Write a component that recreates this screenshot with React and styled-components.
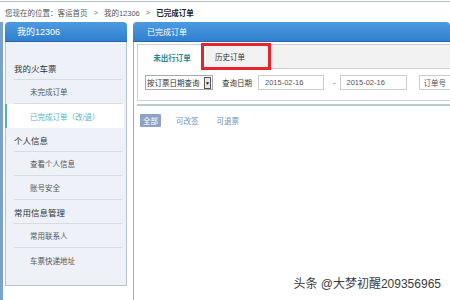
import React from "react";
import styled, { createGlobalStyle } from "styled-components";

const GlobalStyle = createGlobalStyle`
  body {
    margin: 0;
    background: #fff;
    font-family: "Liberation Sans", "Noto Sans CJK SC", sans-serif;
  }
`;

const Page = styled.div`
  position: relative;
  width: 450px;
  height: 300px;
  overflow: hidden;
  display: flex;
  flex-direction: column;
  background: #fff;
`;

const Breadcrumb = styled.div`
  height: 21px;
  box-sizing: border-box;
  border-top: 1px solid #b4c2cf;
  margin-top: 1px;
  padding-left: 5px;
  display: flex;
  align-items: center;
  font-size: 7.5px;
  color: #333;
`;

const Crumb = styled.span`
  color: ${(p) => (p.$current ? "#222" : "#555")};
  font-weight: ${(p) => (p.$current ? "bold" : "normal")};
`;

const Arrow = styled.span`
  margin: 0 6px;
  color: #666;
`;

const Body = styled.div`
  flex: 1;
  display: flex;
  min-height: 0;
`;

const EdgeStrip = styled.div`
  width: 3px;
  background: #7aa3c9;
  flex-shrink: 0;
`;

const Sidebar = styled.div`
  width: 122px;
  margin-left: 2px;
  flex-shrink: 0;
  display: flex;
  flex-direction: column;
  align-self: flex-start;
`;

const PanelHeader = styled.div`
  height: 20px;
  box-sizing: border-box;
  border-radius: 4px 4px 0 0;
  background: linear-gradient(#4c9be0, #2f80cf);
  border-bottom: 1px solid #2469b0;
  color: #fff;
  display: flex;
  align-items: center;
  padding-left: ${(p) => p.$indent}px;
  font-size: ${(p) => p.$size}px;
`;

const SideBody = styled.div`
  height: 244px;
  box-sizing: border-box;
  background: #eef2f8;
  border: 1px solid #b9c3cd;
  border-top: none;
  padding-top: 14px;
  display: flex;
  flex-direction: column;
`;

const SideHeading = styled.div`
  height: 24px;
  box-sizing: border-box;
  margin: 0 4px 0 8px;
  border-bottom: 1px solid #d6dce4;
  display: flex;
  align-items: center;
  font-size: 8.5px;
  color: #333;
`;

const SideItem = styled.div`
  height: 24px;
  box-sizing: border-box;
  display: flex;
  align-items: center;
  font-size: 7.5px;
  margin: ${(p) => (p.$active ? "0 2px 0 -1px" : "0 4px 0 8px")};
  padding-left: ${(p) => (p.$active ? "23px" : "16px")};
  background: ${(p) => (p.$active ? "#fff" : "transparent")};
  border-left: ${(p) => (p.$active ? "2px solid #5aaebb" : "none")};
  border-bottom: ${(p) => (p.$last || p.$active ? "none" : "1px solid #d6dce4")};
  color: ${(p) => (p.$active ? "#5fb0bc" : "#555")};
`;

const Main = styled.div`
  flex: 1;
  margin-left: 6px;
  min-width: 0;
  display: flex;
  flex-direction: column;
`;

const MainBody = styled.div`
  flex: 1;
  border-left: 1px solid #a9a9a9;
  padding: 2px 0 0 3px;
  overflow: hidden;
`;

const TabBox = styled.div`
  position: relative;
  width: 340px;
  border: 1px solid #cfcfcf;
  box-sizing: border-box;
`;

const TabStrip = styled.div`
  height: 24px;
  box-sizing: border-box;
  background: #f2f2f2;
  border-bottom: 1px solid #cfcfcf;
  display: flex;
`;

const Tab = styled.div`
  height: ${(p) => (p.$active ? "24px" : "23px")};
  box-sizing: border-box;
  display: flex;
  align-items: center;
  justify-content: ${(p) => (p.$active ? "center" : "flex-start")};
  width: ${(p) => (p.$active ? "68px" : "auto")};
  padding: ${(p) => (p.$active ? "0" : "0 20px 0 9px")};
  background: ${(p) => (p.$active ? "#fff" : "transparent")};
  font-size: 7.5px;
  font-weight: ${(p) => (p.$active ? "bold" : "normal")};
  color: ${(p) => (p.$active ? "#2b8797" : "#333")};
`;

const RedMark = styled.div`
  position: absolute;
  left: 63px;
  top: -2px;
  width: 70px;
  height: 27px;
  box-sizing: border-box;
  border: 3px solid #e2262c;
`;

const SearchRow = styled.div`
  display: flex;
  align-items: center;
  padding: 6px 0 10px 7px;
  font-size: 7.5px;
  color: #333;
  white-space: nowrap;
`;

const Select = styled.div`
  height: 15px;
  width: 68px;
  flex-shrink: 0;
  box-sizing: border-box;
  border: 1px solid #a8a8a8;
  display: flex;
  align-items: center;
  justify-content: space-between;
  padding-left: 1px;
  background: #fff;
`;

const SelectArrow = styled.span`
  width: 7px;
  height: 12px;
  margin-right: 1px;
  box-sizing: border-box;
  border: 1px solid #555;
  background: #e8e8e8;
  display: flex;
  align-items: center;
  justify-content: center;
  font-size: 5px;
  color: #111;
`;

const Label = styled.span`
  margin: 0 6px 0 9px;
  flex-shrink: 0;
`;

const Field = styled.div`
  height: 15px;
  width: ${(p) => p.$w}px;
  box-sizing: border-box;
  border: 1px solid #cdcdcd;
  background: #fff;
  display: flex;
  align-items: center;
  padding-left: ${(p) => (p.$tight ? 4 : 6)}px;
  color: #555;
  flex-shrink: 0;
  margin-left: ${(p) => p.$gap || 0}px;
`;

const Dash = styled.span`
  margin: 0 4px 0 9px;
  color: #555;
`;

const Divider = styled.div`
  height: 2px;
  margin-top: 3px;
  background: #b3cdd0;
`;

const FilterRow = styled.div`
  display: flex;
  align-items: center;
  margin-top: 8px;
  padding-left: 3px;
  font-size: 7.5px;
`;

const Filter = styled.span`
  margin-right: ${(p) => (p.$on ? "15px" : "18px")};
  padding: ${(p) => (p.$on ? "1px 3px" : "0")};
  background: ${(p) => (p.$on ? "#8ea2c5" : "transparent")};
  color: ${(p) => (p.$on ? "#fff" : "#6f95bb")};
  border-radius: 1px;
`;

const Watermark = styled.div`
  position: absolute;
  right: 9px;
  bottom: 9px;
  font-size: 12px;
  color: #3c3c3c;
  text-shadow: 0 0 2px #fff, 0 0 1px #fff;
  font-family: "Liberation Sans", "Noto Sans CJK SC", sans-serif;
`;

const menu = [
  { heading: "我的火车票", items: ["未完成订单", "已完成订单（改/退）"] },
  { heading: "个人信息", items: ["查看个人信息", "账号安全"] },
  { heading: "常用信息管理", items: ["常用联系人", "车票快递地址"] },
];

export default function App() {
  return (
    <Page>
      <GlobalStyle />
      <Breadcrumb>
        <Crumb>您现在的位置：</Crumb>
        <Crumb>客运首页</Crumb>
        <Arrow>&gt;</Arrow>
        <Crumb>我的12306</Crumb>
        <Arrow>&gt;</Arrow>
        <Crumb $current>已完成订单</Crumb>
      </Breadcrumb>
      <Body>
        <EdgeStrip />
        <Sidebar>
          <PanelHeader $indent={12} $size={9}>我的12306</PanelHeader>
          <SideBody>
            {menu.map((group, gi) => (
              <React.Fragment key={group.heading}>
                <SideHeading>{group.heading}</SideHeading>
                {group.items.map((item, ii) => (
                  <SideItem
                    key={item}
                    $active={item === "已完成订单（改/退）"}
                    $last={gi === menu.length - 1 && ii === group.items.length - 1}
                  >
                    {item}
                  </SideItem>
                ))}
              </React.Fragment>
            ))}
          </SideBody>
        </Sidebar>
        <Main>
          <PanelHeader $indent={14} $size={8}>已完成订单</PanelHeader>
          <MainBody>
            <TabBox>
              <TabStrip>
                <Tab $active>未出行订单</Tab>
                <Tab>历史订单</Tab>
              </TabStrip>
              <RedMark />
              <SearchRow>
                <Select>
                  按订票日期查询
                  <SelectArrow>▼</SelectArrow>
                </Select>
                <Label>查询日期</Label>
                <Field $w={66}>2015-02-16</Field>
                <Dash>-</Dash>
                <Field $w={67}>2015-02-16</Field>
                <Field $w={60} $gap={12} $tight>订单号</Field>
              </SearchRow>
            </TabBox>
            <Divider />
            <FilterRow>
              <Filter $on>全部</Filter>
              <Filter>可改签</Filter>
              <Filter>可退票</Filter>
            </FilterRow>
          </MainBody>
        </Main>
      </Body>
      <Watermark>头条 @大梦初醒209356965</Watermark>
    </Page>
  );
}
